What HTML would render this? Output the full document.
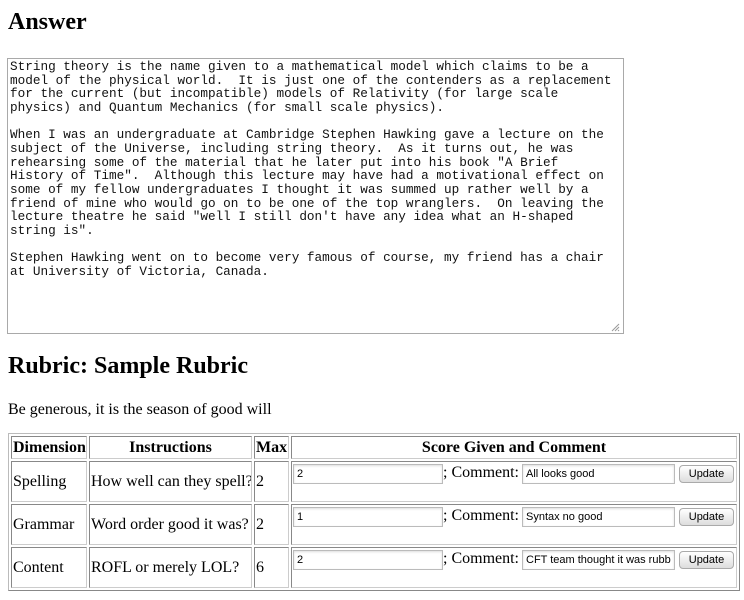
<!DOCTYPE html>
<html><head><meta charset="utf-8"><style>
body{margin:0;width:744px;height:600px;overflow:hidden;font-family:"Liberation Serif",serif;font-size:16px;color:#000;background:#fff;position:relative}
h2{position:absolute;left:8px;margin:0;font-size:24px;font-weight:bold}
.ta{position:absolute;left:7px;top:58px;width:613px;height:273px;border:1px solid #a9a9a9;box-sizing:content-box;font-family:"Liberation Mono",monospace;font-size:12.7px;line-height:13.65px;white-space:pre;padding:1px 0 0 2px;color:#111;overflow:hidden}
.grip{position:absolute;left:610px;top:322px;width:10px;height:10px}
p{position:absolute;left:8px;top:401px;margin:0}
table{position:absolute;left:8px;top:433px;width:732px;table-layout:fixed;border:1px solid #999;border-collapse:separate;border-spacing:2px;border-color:#bbb #888 #888 #bbb}
td,th{border:1px solid #999;border-color:#888 #ccc #ccc #888;padding:0 1px;vertical-align:middle;text-align:left;white-space:nowrap;overflow:hidden}
th{text-align:center;height:21px}
td{height:37px}
td.s{vertical-align:top;padding-top:2px}
input{font-family:"Liberation Sans",sans-serif;font-size:11px;border:1px solid #bbb;box-shadow:inset 0 1px 2px #ddd;height:20px;padding:0 3px;box-sizing:border-box;vertical-align:top}
.n{width:150px}.c{width:153px;margin-left:3px}
button{font-family:"Liberation Sans",sans-serif;font-size:11px;height:18px;width:55px;border:1px solid #aaa;border-radius:4px;background:linear-gradient(#fff,#ddd);margin-left:4px;vertical-align:top;margin-top:1px;padding:0}
</style></head><body>
<h2 style="top:9px">Answer</h2>
<div class="ta">String theory is the name given to a mathematical model which claims to be a
model of the physical world.  It is just one of the contenders as a replacement
for the current (but incompatible) models of Relativity (for large scale
physics) and Quantum Mechanics (for small scale physics).

When I was an undergraduate at Cambridge Stephen Hawking gave a lecture on the
subject of the Universe, including string theory.  As it turns out, he was
rehearsing some of the material that he later put into his book "A Brief
History of Time".  Although this lecture may have had a motivational effect on
some of my fellow undergraduates I thought it was summed up rather well by a
friend of mine who would go on to be one of the top wranglers.  On leaving the
lecture theatre he said "well I still don't have any idea what an H-shaped
string is".

Stephen Hawking went on to become very famous of course, my friend has a chair
at University of Victoria, Canada.</div>
<svg class="grip" viewBox="0 0 10 10"><path d="M2 9L9 2M5 9L9 5M8 9L9 8" stroke="#999" stroke-width="1"/></svg>
<h2 style="top:353px">Rubric: Sample Rubric</h2>
<p>Be generous, it is the season of good will</p>
<table>
<colgroup><col style="width:76px"><col style="width:163px"><col style="width:35px"><col></colgroup>
<tr><th>Dimension</th><th>Instructions</th><th>Max</th><th>Score Given and Comment</th></tr>
<tr><td>Spelling</td><td>How well can they spell?</td><td>2</td><td class="s"><input class="n" value="2">; Comment:<input class="c" value="All looks good"><button>Update</button></td></tr>
<tr><td>Grammar</td><td>Word order good it was?</td><td>2</td><td class="s"><input class="n" value="1">; Comment:<input class="c" value="Syntax no good"><button>Update</button></td></tr>
<tr><td>Content</td><td>ROFL or merely LOL?</td><td>6</td><td class="s"><input class="n" value="2">; Comment:<input class="c" value="CFT team thought it was rubbish"><button>Update</button></td></tr>
</table>
</body></html>
